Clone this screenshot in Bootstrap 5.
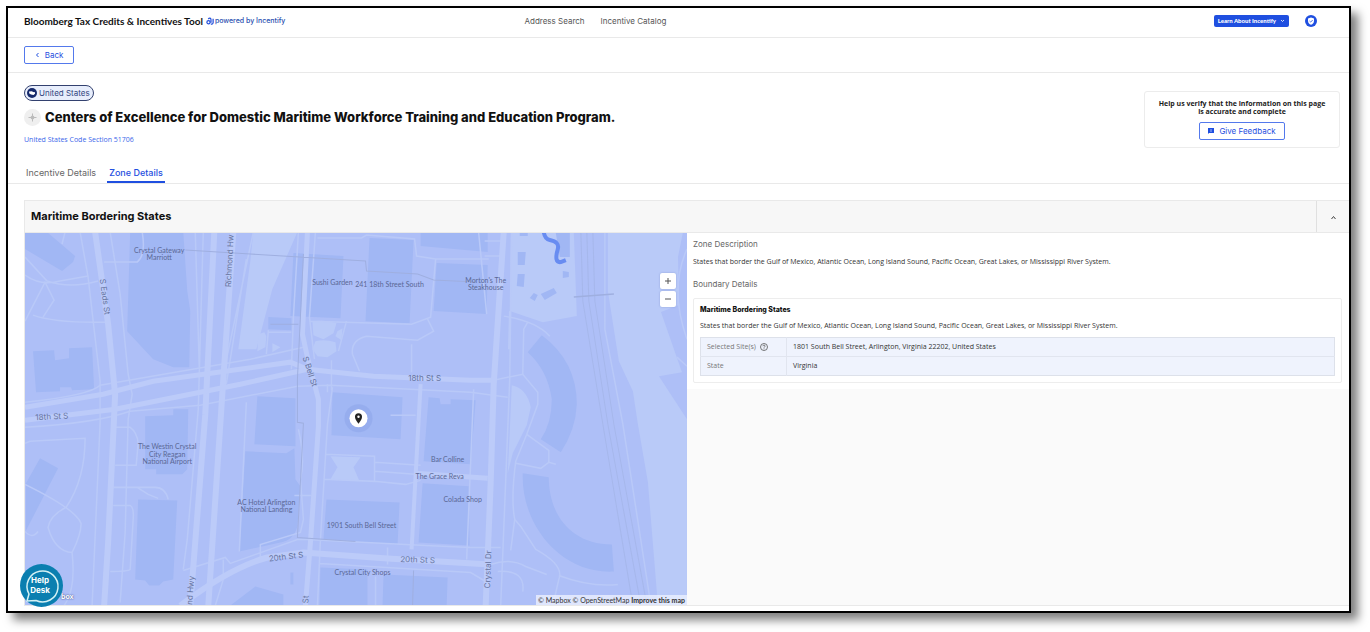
<!DOCTYPE html>
<html lang="en">
<head>
<meta charset="utf-8">
<meta name="viewport" content="width=device-width, initial-scale=1">
<title>Centers of Excellence – Zone Details</title>
<link href="https://cdn.jsdelivr.net/npm/bootstrap@5.3.0/dist/css/bootstrap.min.css" rel="stylesheet">
<style>
  :root { --ink:#1c1c1c; --blue:#1f4fe0; --grey:#666; --line:#e9e9e9; }
  body { font-family:Inter,"Liberation Sans",sans-serif; font-size:8px; line-height:12px; color:var(--ink); background:#fff; }
  a { text-decoration:none; }
  .window-frame { margin:6px 19px 19px 6px; border:2px solid #000; box-shadow:7px 7px 9px rgba(0,0,0,.5); background:#fff; padding-bottom:5px; }
  .topbar { display:grid; grid-template-columns:1fr auto 1.3fr; align-items:center; height:30px; padding:0 32px 4px 16px; border-bottom:1px solid var(--line); }
  .brand-name { font-family:Lato,sans-serif; font-weight:700; font-size:10px; color:#111; }
  .powered { color:#2a4fb0; font-weight:500; font-size:7px; gap:1px; margin-left:3px; }
  .top-link { color:#555; font-size:8px; }
  .btn-learn { background:var(--blue); color:#fff; font-family:Lato,sans-serif; font-size:6px; line-height:8px; font-weight:900; border-radius:2px; padding:2px 4px; border:0; }
  .backbar { padding:8px 16px; border-bottom:1px solid var(--line); }
  .btn-line { border:1px solid #5479ec; color:var(--blue); font-size:8px; line-height:14px; border-radius:2px; padding:0 8px 1px; background:#fff; display:inline-flex; align-items:center; justify-content:center; gap:5px; height:18px; }
  .btn-back { width:50px; padding:0 0 1px; }
  .intro { border-bottom:1px solid var(--line); padding:12px 9px 0 16px; }
  .country { border:1px solid #33416f; background:#e8eefc; border-radius:8px; height:16px; padding:0 3px 0 2px; gap:2px; color:#33477f; }
  .zone-mark { width:17px; height:17px; border-radius:50%; background:#efefef; }
  h1 { font-size:13px; line-height:17px; font-weight:800; color:#111; margin:0; }
  .code-link { font-family:"Open Sans",sans-serif; font-size:7px; font-weight:500; color:#3b66ea; margin-top:8px; }
  .feedback { width:196px; border:1px solid #ececec; border-radius:3px; padding:8px 12px 7px; margin-top:6px; }
  .feedback p { font-family:"Open Sans",sans-serif; font-weight:700; line-height:8px; font-size:7px; margin:0 0 6px; }
  .zone-tabs { --bs-nav-link-padding-x:2px; gap:9px; margin-top:15px; }
  .zone-tabs .nav-link { color:var(--grey); font-size:9px; line-height:12px; padding-top:4px; padding-bottom:2px; border-bottom:2px solid transparent; }
  .zone-tabs .nav-link.active { color:var(--blue); border-color:var(--blue); font-weight:500; }
  .zone-panel { margin:16px 0 0 16px; border:1px solid var(--line); border-right:0; }
  .zone-head { background:#f7f7f7; border-bottom:1px solid var(--line); height:32px; }
  .zone-head h2 { font-size:11px; line-height:16px; font-weight:700; margin:0; padding:0 0 2px 6px; color:#111; }
  .btn-fold { width:33px; height:31px; border:0; border-left:1px solid #e0e0e0; background:transparent; padding:0; }
  .zone-body { display:grid; grid-template-columns:1fr 1fr; background:#fafafa; }
  .map-box { position:relative; background:#aebff7; }
  .map-box svg.streets { display:block; width:100%; height:auto; }
  .map-zoom { position:absolute; right:11px; top:40px; gap:2px; }
  .map-zoom button { width:16px; height:16px; padding:0; border:0; border-radius:2px; background:#fff; display:flex; align-items:center; justify-content:center; box-shadow:0 0 2px rgba(60,80,160,.35); }
  .map-credit { position:absolute; right:0; bottom:0; background:rgba(235,240,254,.8); font-family:Lato,sans-serif; font-size:7px; line-height:10px; padding:0 2px; color:#333; }
  .map-credit a { color:#333; }
  .help-desk { position:absolute; left:-5px; bottom:-2px; width:43px; height:43px; border:0; padding:0; background:transparent; }
  .mapbox-word { position:absolute; left:36px; bottom:4px; color:#fff; font-weight:700; font-size:7px; line-height:9px; text-shadow:0 0 2px #4b5c9b,0 0 1px #4b5c9b; }
  .about { background:#fff; padding:5px 7px 6px 6px; }
  .about, .zone-table { font-family:"Open Sans",sans-serif; font-size:7px; font-weight:500; color:#333; }
  .about h3 { font-family:Inter,sans-serif; font-size:8px; line-height:12px; font-weight:400; color:var(--grey); margin:0; }
  .about p { margin:0; }
  .zone-text { padding:6px 0 10px; }
  .bound-box { border:1px solid #ededed; padding:5px 6px 6px; margin-top:8px; border-radius:2px; }
  .bound-box h4 { font-family:Inter,sans-serif; font-size:7px; line-height:12px; font-weight:800; color:#111; margin:0 0 4px; }
  .zone-table { width:100%; border:1px solid #dde1ea; border-collapse:collapse; background:#eff3fd; line-height:12px; margin-top:5px; }
  .zone-table th { width:86px; font-weight:500; color:#777; border-right:1px solid #e1e5ef; }
  .zone-table th, .zone-table td { padding:3px 6px; height:19px; }
  .zone-table tr + tr { border-top:1px solid #e1e5ef; }
  .streets text { font-family:Lato,sans-serif; fill:#5a6795; font-size:7px; text-anchor:middle; }
  .streets .street-name { font-family:Inter,sans-serif; font-size:8px; fill:#66749f; }
</style>
</head>
<body>
<div class="window-frame">
  <header class="topbar">
    <div class="d-flex align-items-center">
      <span class="brand-name">Bloomberg Tax Credits &amp; Incentives Tool</span>
      <a href="#" class="powered d-flex align-items-center">
        <svg width="8" height="8" viewBox="0 0 9 9" fill="none" stroke="#2450dc" stroke-width="1.400"><circle cx="2.800" cy="5.800" r="1.800"/><path d="M2.500 2.200C4 .7 5.600 1.200 5.600 3v3.500M8 2v4.500C7.800 8 6.500 8.300 5.500 8"/></svg>powered by Incentify</a>
    </div>
    <nav class="d-flex gap-3">
      <a class="top-link" href="#">Address Search</a>
      <a class="top-link" href="#">Incentive Catalog</a>
    </nav>
    <div class="d-flex align-items-center justify-content-end">
      <button class="btn-learn d-flex align-items-center gap-1" type="button">Learn About Incentify
        <svg width="5" height="4" viewBox="0 0 5 4" fill="none" stroke="#fff" stroke-width=".8"><path d="M1 1l1.500 1.500L4 1"/></svg></button>
      <svg class="ms-3" width="12" height="12" viewBox="0 0 12 12"><circle cx="6" cy="6" r="6" fill="#1f4fe0"/><path d="M6 2.500l3 1v2.200C9 7.800 7.800 9 6 9.700 4.200 9 3 7.800 3 5.700V3.500z" fill="#fff"/><path d="M4.500 6l1.200 1.100L7.700 5" fill="none" stroke="#1f4fe0" stroke-width=".8"/></svg>
    </div>
  </header>

  <div class="backbar">
    <button class="btn-line btn-back" type="button"><svg width="5" height="6" viewBox="0 0 5 6" fill="none" stroke="#1f4fe0"><path d="M3.500 1l-2 2 2 2"/></svg>Back</button>
  </div>

  <section class="intro">
    <div class="d-flex justify-content-between">
      <div>
        <div class="country d-inline-flex align-items-center">
          <svg width="10" height="10" viewBox="0 0 10 10"><circle cx="5" cy="5" r="5" fill="#15296b"/><path d="M2 3.500l3-.3 1 .8 2 .2v1.500L6.500 7 4 6.500 2.300 5.500z" fill="#fff"/></svg>United States</div>
        <div class="d-flex align-items-center gap-1 mt-2">
          <span class="zone-mark d-flex align-items-center justify-content-center"><svg width="9" height="9" viewBox="0 0 9 9" stroke="#bbb" fill="none"><circle cx="4.500" cy="4.500" r="1.500" fill="#999"/><path d="M4.500 .5v8M.5 4.500h8"/></svg></span>
          <h1>Centers of Excellence for Domestic Maritime Workforce Training and Education Program.</h1>
        </div>
        <a class="code-link d-block" href="#">United States Code Section 51706</a>
      </div>
      <aside class="feedback text-center">
        <p>Help us verify that the information on this page<br>is accurate and complete</p>
        <button class="btn-line" type="button"><svg width="6" height="6" viewBox="0 0 6 6"><path d="M0 0h6v5H1L0 6z" fill="#1f4fe0"/><path d="M3 1v3" stroke="#fff" stroke-width=".6"/></svg>Give Feedback</button>
      </aside>
    </div>
    <ul class="nav zone-tabs">
      <li class="nav-item"><a class="nav-link" href="#">Incentive Details</a></li>
      <li class="nav-item"><a class="nav-link active" aria-current="page" href="#">Zone Details</a></li>
    </ul>
  </section>

  <section class="zone-panel">
    <div class="zone-head d-flex align-items-center justify-content-between">
      <h2>Maritime Bordering States</h2>
      <button class="btn-fold" type="button" aria-label="Collapse"><svg width="7" height="5" viewBox="0 0 7 5" fill="none" stroke="#444"><path d="M1.500 4l2-2.500 2 2.500"/></svg></button>
    </div>
    <div class="zone-body">
      <div class="map-box">
        <svg class="streets" viewBox="25 234 661 371" role="img" aria-label="Map">
          <rect x="25" y="234" width="661" height="371" fill="#aebff7"/>
          <!-- open ground -->
          <g fill="#b9caf8">
            <path d="M253 233H297L272 290 256 350H238L250 262z"/>
            <path d="M510 234H573L576 317 542 323 509 312z"/>
            <path d="M607 233V292L618 362 632 392 637 425 647 483 657 606H686V420L658 377 681 373 660 313 678 306 677 258 682 233z"/>
            <path d="M312 323q10-3 24 1l-3 10-10 6-10-4zM337 332l5-3-1 12-6-4zM315 342q10-2 20 1l1 9-9 6-10-1-5-7zM258 335l6-2 2 4-1 11-8 4zM272 344l8 4-8 5z"/>
            <path d="M330 457L360 458 353 468 359 482 330 480 337 468z"/>
            <path d="M511 386q15 3 19 22l-4 18-14 28-5 20 2-40z"/>
          </g>
          <!-- buildings -->
          <g fill="#a1b7f4">
            <path d="M25 234H48L75 257 73 263 62 272 25 250z"/>
            <path d="M130 233H183L187 292 190 312 189 368H173L153 360 127 332z"/>
            <path d="M33 352L54 351 55 361 69 359V349L92 348 94 390 72 391 71 388H60V392L36 393z"/>
            <path d="M293 254L343 257 340 319 290 317z"/>
            <path d="M369 239L413 241 409 324 365 322z"/>
            <path d="M420 234H487V253L420 247z"/>
            <path d="M436 264L487 266 486 315 433 312z"/>
            <path d="M268 318L291 319V331L268 330z"/>
            <path d="M257 397L295 399V447L254 445z"/>
            <path d="M332 393L402 398 400 440 331 436z"/>
            <path d="M428 398L439 399 440 405H450V400L475 401 470 465 423 462z"/>
            <path d="M245 452L286 454 294 449 295 480 300 487 297 527Q293 541 280 543L239 552z"/>
            <path d="M326 500L399 503 397 545 323 540z"/>
            <path d="M422 484L468 487 469 546 418 543z"/>
            <path d="M320 568L367 570V606H319z"/>
            <path d="M383 575L447 578 446 606H382z"/>
            <path d="M230 606L255 587 283 595V606z"/>
            <path d="M145 417L173 416V410H188L187 470 182 475H156V470H145z"/>
            <path d="M138 500L177 501 173 580 163 582 159 586H149L145 581 135 580z"/>
            <path d="M40 459L58 469 26 531V484z"/>
            <path d="M541 336Q576 362 576 405 575 430 560 453L540 440Q551 424 551 400 547 371 527 353z"/>
            <path d="M522 474L548 478C548 515 570 545 611 545L613 572C560 575 520 525 522 474z"/>
            <path d="M555 234h14v24h-10zM517 253h8l-1 13h-7zM517 275h7l-1 13-7-1zM533 294l4 2-3 6-5-3zM540 295l13-6 3 5-12 7zM562 272l6 1v5l-6 1zM519 234h8v3h-8zM290 573h3v12h-3z"/>
          </g>
          <!-- minor streets -->
          <g fill="none" stroke="#b9c9f8" stroke-width="1.500">
            <path d="M80 233L88 278 100 382V423L92 606M110 233L120 295 128 375 132 395 128 420 125 533 120 603"/>
            <path d="M25 258L47 282Q70 290 98 282M25 276Q40 287 60 282L88 277M25 322L45 283 54 301 43 318M33 316Q55 324 106 323M65 233l-3 12M104 263H137Q146 256 142 233"/>
            <path d="M195 233L199 368M203 233L198 410 187 540 183 570M253 233L222 380M246 260L226 385M298 233L293 318 291 370M315 233L309 318 314 360M317 239H361L366 236 414 240 416 257 435 260H488M435 260L430 318 411 325 310 322M427 320L433 332 417 341 366 337Q350 341 352 355L359 372M268 333h23M268 331l-2 24M411 345v28M331 361v30M327 385v8M346 322L338 352"/>
            <path d="M25 403Q90 396 100 386L250 360 303 348M25 428Q95 424 130 412L200 406 297 387 330 386 470 393 507 398M473 390L466 560M478 234L486 315M511 234L509 380 500 606M509 312L508 350M493 381L522 375 537 393V405L526 435 515 462Q510 500 514 520L520 527 535 550Q564 566 558 580L552 606"/>
            <path d="M503 317Q535 322 549 337M527 323l-4 7-1 45M526 435L548 451V463L540 469 515 464M548 463l7 2M514 520L510 551M490 565Q510 558 525 567L546 575M558 576Q590 588 617 585M497 572Q525 570 522 592M604 233V330L622 425 650 606"/>
            <path d="M25 444L30 442 85 439Q85 480 66 508 50 516 48 528 55 552 72 553 81 535 81 524 76 510 25 485M72 553Q76 590 64 606M113 428H130Q137 433 138 444L136 466H115M113 488H155Q165 488 168 500M137 488L148 495 158 499M113 506H130Q134 508 133 520L130 570Q128 572 110 572M25 532Q32 540 38 532"/>
            <path d="M183 571L225 558 230 564 297 540 306 540 425 546 470 548 500 548M325 455L374 457V482L323 480M374 463L420 466M374 472L415 475M374 482L405 485 420 481M390 416H415M294 496H311M319 564L470 573 490 585M375 577V606M387 548V565M246 403L239 552M298 430Q305 460 300 480L303 520 300 533 260 545V558M332 388L327 425 320 540 317 606M223 560V580L215 606"/>
            <path d="M686 250Q668 290 686 340M676 358L686 367M484 242h20M484 257h18"/>
          </g>
          <!-- main streets -->
          <g fill="none" stroke="#bccbf9" stroke-width="6">
            <path d="M95 233L108 325 115 395 108 543 104 606"/>
            <path d="M214 233L205 415 190 606M233 233L222 395 208 606"/>
            <path d="M25 408L103 395 153 382 290 363 307 370 373 377 470 381H493" stroke-width="5"/>
            <path d="M25 421L115 410 240 385 307 370" stroke-width="5"/>
            <path d="M307 233L302 335 307 358 318 400V427L310 543 305 606" stroke-width="5"/>
            <path d="M503 233L493 385 490 483 485 606"/>
            <path d="M180 606Q230 568 267 558L303 553 387 559 490 565"/>
            <path d="M420 385L411 550" stroke-width="4"/>
            <path d="M415 474L487 479" stroke-width="5"/>
          </g>
          <!-- transit lines -->
          <g fill="none" stroke="#9fafe0">
            <path d="M185 251L250 255 365 262 366 272 417 275 433 281 475 283M303 255L297 380V423L303 424 300 483 297 538 355 542M413 571L412 606M270 325H298"/>
            <path d="M573 298L613 295" stroke-width="1.500"/>
            <g stroke-width=".8" opacity=".65"><path d="M580 233L582 302 602 425 632 606M586 233L588 302 607 425 640 606M592 233L594 302 613 425 646 606"/></g>
          </g>
          <path d="M543 233Q544 240 549 241 559 243 557 250 553 264 560 263L565 261" fill="none" stroke="#688cf1" stroke-width="4"/>
          <!-- labels -->
          <g>
            <text x="159" y="254">Crystal Gateway</text><text x="159" y="261">Marriott</text>
            <text x="332" y="286">Sushi Garden</text><text x="389" y="288">241 18th Street South</text>
            <text x="485" y="284">Morton's The</text><text x="485" y="291">Steakhouse</text>
            <text x="167" y="450">The Westin Crystal</text><text x="167" y="458">City Reagan</text><text x="167" y="465">National Airport</text>
            <text x="447" y="463">Bar Colline</text><text x="439" y="480">The Grace Reva</text><text x="462" y="503">Colada Shop</text>
            <text x="266" y="506">AC Hotel Arlington</text><text x="266" y="513">National Landing</text>
            <text x="361" y="529">1901 South Bell Street</text><text x="362" y="576">Crystal City Shops</text>
            <text class="street-name" x="424" y="382">18th St S</text>
            <text class="street-name" transform="translate(52 420) rotate(-3)">18th St S</text>
            <text class="street-name" transform="translate(286 560) rotate(-7)">20th St S</text>
            <text class="street-name" transform="translate(417 563) rotate(2)">20th St S</text>
            <text class="street-name" transform="translate(102 298) rotate(82)">S Eads St</text>
            <text class="street-name" transform="translate(307 373) rotate(72)">S Bell St</text>
            <text class="street-name" transform="translate(232 262) rotate(-87)">Richmond Hw</text>
            <text class="street-name" transform="translate(193 591) rotate(-86)">nd Hwy</text>
            <text class="street-name" transform="translate(490 570) rotate(-88)">Crystal Dr</text>
            <text class="street-name" transform="translate(308 600) rotate(-87)">St</text>
          </g>
          <circle cx="358" cy="419" r="14" fill="#7f98e0" opacity=".3"/>
          <circle cx="358" cy="419" r="9" fill="#fff"/>
          <path d="M358 424.500C355.500 421 354.500 419.500 354.500 417.500a3.500 3.500 0 0 1 7 0C361.500 419.500 360.500 421 358 424.500z" fill="#222"/><circle cx="358" cy="417.500" r="1.200" fill="#fff"/>
        </svg>
        <div class="map-zoom d-grid">
          <button type="button" aria-label="Zoom in"><svg width="8" height="8" viewBox="0 0 8 8" stroke="#555"><path d="M4 1v6M1 4h6"/></svg></button>
          <button type="button" aria-label="Zoom out"><svg width="8" height="8" viewBox="0 0 8 8" stroke="#555"><path d="M1 4h6"/></svg></button>
        </div>
        <span class="mapbox-word">box</span>
        <button class="help-desk" type="button" aria-label="Help Desk">
          <svg width="43" height="43" viewBox="0 0 43 43"><circle cx="21.500" cy="21.500" r="21.500" fill="#0b7fb0"/><path d="M7 37l2-7a15.500 15.500 0 1 1 7 6.500z" fill="none" stroke="#d4f1f4" stroke-width="1.500"/><text x="20" y="19" fill="#fff" font-family="Inter,sans-serif" font-size="8" font-weight="700" text-anchor="middle">Help</text><text x="20" y="29" fill="#fff" font-family="Inter,sans-serif" font-size="8" font-weight="700" text-anchor="middle">Desk</text></svg>
        </button>
        <div class="map-credit"><a href="#">© Mapbox</a> <a href="#">© OpenStreetMap</a> <a href="#" class="fw-bold">Improve this map</a></div>
      </div>
      <div>
        <div class="about">
          <h3>Zone Description</h3>
          <p class="zone-text">States that border the Gulf of Mexico, Atlantic Ocean, Long Island Sound, Pacific Ocean, Great Lakes, or Mississippi River System.</p>
          <h3>Boundary Details</h3>
          <div class="bound-box">
            <h4>Maritime Bordering States</h4>
            <p>States that border the Gulf of Mexico, Atlantic Ocean, Long Island Sound, Pacific Ocean, Great Lakes, or Mississippi River System.</p>
            <table class="zone-table">
              <tr><th scope="row"><span class="d-flex align-items-center gap-1">Selected Site(s) <svg width="8" height="8" viewBox="0 0 8 8" fill="none" stroke="#555" stroke-width=".8"><circle cx="4" cy="4" r="3.500"/><path d="M2.900 3.200c0-1.500 2.300-1.300 2.200 0 0 .7-1.100.7-1.100 1.500M4 5.400v.8"/></svg></span></th><td>1801 South Bell Street, Arlington, Virginia 22202, United States</td></tr>
              <tr><th scope="row">State</th><td>Virginia</td></tr>
            </table>
          </div>
        </div>
      </div>
    </div>
  </section>
</div>
<script src="https://cdn.jsdelivr.net/npm/bootstrap@5.3.0/dist/js/bootstrap.bundle.min.js"></script>
</body>
</html>
